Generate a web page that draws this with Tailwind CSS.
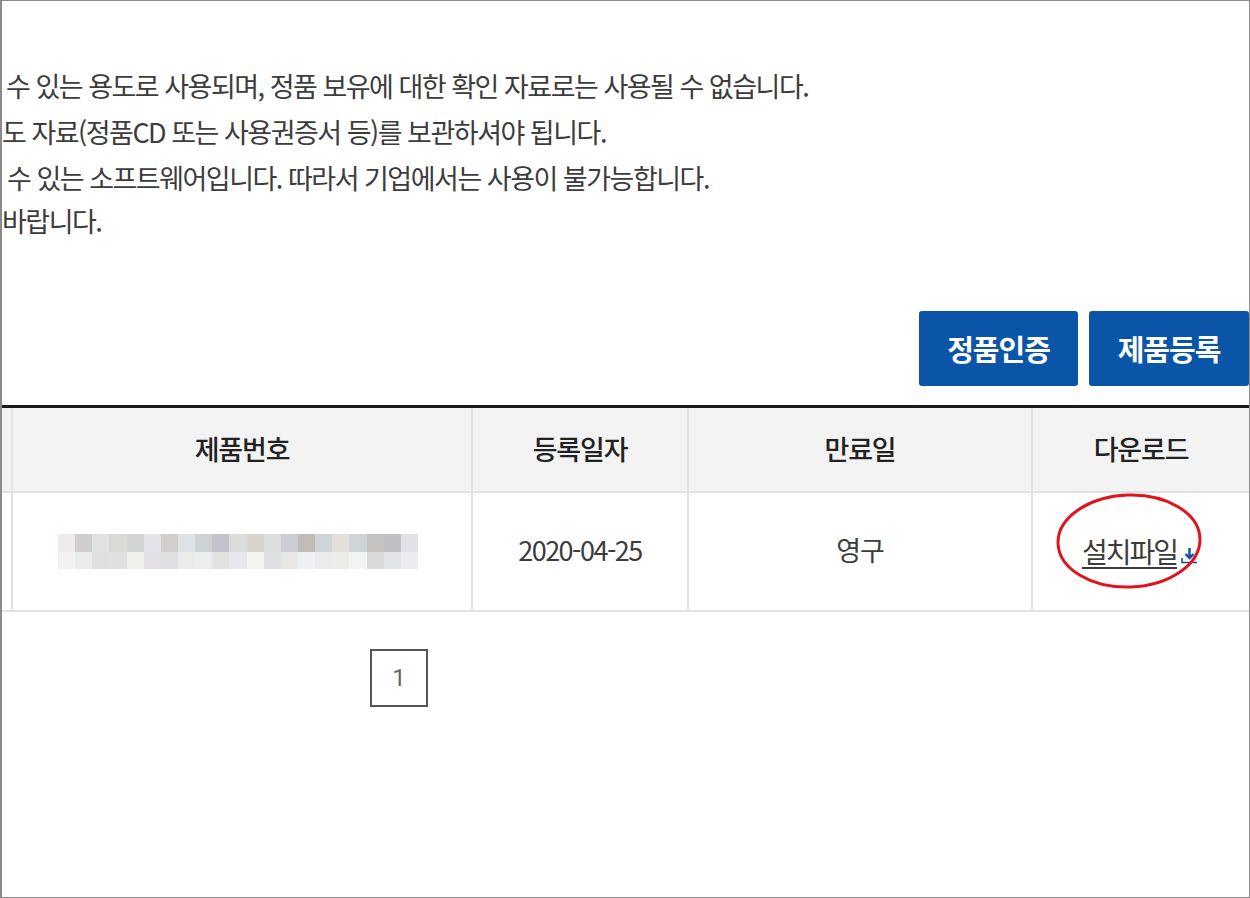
<!DOCTYPE html>
<html lang="ko">
<head>
  <meta charset="UTF-8">
  <title>제품 등록</title>
  <script src="https://cdn.jsdelivr.net/npm/@tailwindcss/browser@4"></script>
</head>
<body class="bg-white">
  <div class="relative h-[898px] w-[1250px] overflow-hidden border border-[#8a8a8a] border-l-2 font-['Noto_Sans_CJK_KR','Noto_Sans',sans-serif] text-[#333]">

    <div class="h-[63px]"></div>
    <div class="text-[27px] tracking-[-1.5px] whitespace-nowrap h-[247px] text-[#3c3c3c]">
      <p class="h-[46px] leading-[44px] pl-[4px]">수 있는 용도로 사용되며, 정품 보유에 대한 확인 자료로는 사용될 수 없습니다.</p>
      <p class="h-[46px] leading-[44px]">도 자료(정품CD 또는 사용권증서 등)를 보관하셔야 됩니다.</p>
      <p class="h-[43px] leading-[44px] pl-[5px]">수 있는 소프트웨어입니다. 따라서 기업에서는 사용이 불가능합니다.</p>
      <p class="leading-[44px]">바랍니다.</p>
    </div>

    <div class="flex justify-end gap-[11px] h-[94px]">
      <button class="h-[75px] w-[159px] rounded-[3px] bg-[#0b55a8] text-[29px] font-bold tracking-[-1px] text-white">정품인증</button>
      <button class="h-[75px] w-[160px] rounded-[3px] bg-[#0b55a8] text-[29px] font-bold tracking-[-1px] text-white">제품등록</button>
    </div>

    <div class="h-[3px] bg-[#1a1a1a]"></div>

    <div class="grid grid-cols-[11px_460px_216px_344px_1fr] text-[#222]">
      <div class="h-[85px] bg-[#f3f3f3] border-r-2 border-b-2 border-[#e2e2e2]"></div>
      <div class="h-[85px] bg-[#f3f3f3] border-r-2 border-b-2 border-[#e2e2e2] flex items-center justify-center text-[27px] font-medium tracking-[-1.2px]">제품번호</div>
      <div class="h-[85px] bg-[#f3f3f3] border-r-2 border-b-2 border-[#e2e2e2] flex items-center justify-center text-[27px] font-medium tracking-[-1.2px]">등록일자</div>
      <div class="h-[85px] bg-[#f3f3f3] border-r-2 border-b-2 border-[#e2e2e2] flex items-center justify-center text-[27px] font-medium tracking-[-1.2px]">만료일</div>
      <div class="h-[85px] bg-[#f3f3f3] border-b-2 border-[#e2e2e2] flex items-center justify-center text-[27px] font-medium tracking-[-1.2px]">다운로드</div>

      <div class="h-[119px] border-r-2 border-b-2 border-[#e2e2e2]"></div>
      <div class="h-[119px] border-r-2 border-b-2 border-[#e2e2e2] flex items-center justify-center pr-[8px]">
        <div class="grid grid-cols-[repeat(21,17.15px)] grid-rows-[17.5px_17.5px] blur-[0.6px]">
          <i class="bg-[#eeeaea]"></i><i class="bg-[#d0cecc]"></i><i class="bg-[#e0e2e1]"></i><i class="bg-[#d9dad5]"></i><i class="bg-[#d2d4d4]"></i><i class="bg-[#e3e3ea]"></i><i class="bg-[#d2cfcb]"></i><i class="bg-[#dfe3e6]"></i><i class="bg-[#cfd2d2]"></i><i class="bg-[#c4c3cb]"></i><i class="bg-[#dcdcda]"></i><i class="bg-[#d7d3cf]"></i><i class="bg-[#dbdedd]"></i><i class="bg-[#cccdd4]"></i><i class="bg-[#c2bcb9]"></i><i class="bg-[#ced4d8]"></i><i class="bg-[#e2deda]"></i><i class="bg-[#cfd4d8]"></i><i class="bg-[#c5c2c2]"></i><i class="bg-[#bfc0c3]"></i><i class="bg-[#e1e2e5]"></i>
          <i class="bg-[#f3f2f1]"></i><i class="bg-[#e9ebed]"></i><i class="bg-[#e1dfdd]"></i><i class="bg-[#dfe1e0]"></i><i class="bg-[#f0f0ee]"></i><i class="bg-[#e2e0e4]"></i><i class="bg-[#dfe0e3]"></i><i class="bg-[#ebebea]"></i><i class="bg-[#ecedef]"></i><i class="bg-[#e4e2e1]"></i><i class="bg-[#e7e8eb]"></i><i class="bg-[#f3f4f0]"></i><i class="bg-[#dee0e2]"></i><i class="bg-[#e9e7e5]"></i><i class="bg-[#eff0f3]"></i><i class="bg-[#ebebeb]"></i><i class="bg-[#ececeb]"></i><i class="bg-[#f2f4f2]"></i><i class="bg-[#dad9da]"></i><i class="bg-[#e2e3e6]"></i><i class="bg-[#ececee]"></i>
        </div>
      </div>
      <div class="h-[119px] border-r-2 border-b-2 border-[#e2e2e2] flex items-center justify-center pb-[2px] text-[27px] tracking-[-1.5px] text-[#3c3c3c]">2020-04-25</div>
      <div class="h-[119px] border-r-2 border-b-2 border-[#e2e2e2] flex items-center justify-center pb-[2px] text-[27px] tracking-[-1.2px] text-[#3c3c3c]">영구</div>
      <div class="h-[119px] border-b-2 border-[#e2e2e2] flex items-center justify-center gap-[4px] pb-[2px] pr-[2px] text-[28px] tracking-[-2px] text-[#3c3c3c]">
        <span class="underline underline-offset-[4px] decoration-[2px] whitespace-nowrap">설치파일</span>
        <svg class="mt-[8px]" width="17" height="18" viewBox="0 0 17 18" fill="none" stroke="#0b4ea2" stroke-width="2.4">
          <path d="M8.5 2v9.5M4.5 8 8.500 12 12.500 8"/>
          <path d="M1 12v4.500h15" stroke-width="1.500"/>
        </svg>
      </div>
    </div>

    <div class="mt-[37px] ml-[368px] flex h-[58px] w-[58px] items-center justify-center border-2 border-[#555] font-['Roboto',sans-serif] text-[24px] text-[#666]">1</div>

    <!-- red hand-drawn circle over the download link -->
    <svg class="absolute left-[1052px] top-[489px]" width="154" height="102" viewBox="0 0 154 102" fill="none">
      <ellipse cx="75" cy="51" rx="71" ry="46" stroke="#e0141e" stroke-width="3" transform="rotate(-2 75 51)"/>
    </svg>
  </div>
</body>
</html>
